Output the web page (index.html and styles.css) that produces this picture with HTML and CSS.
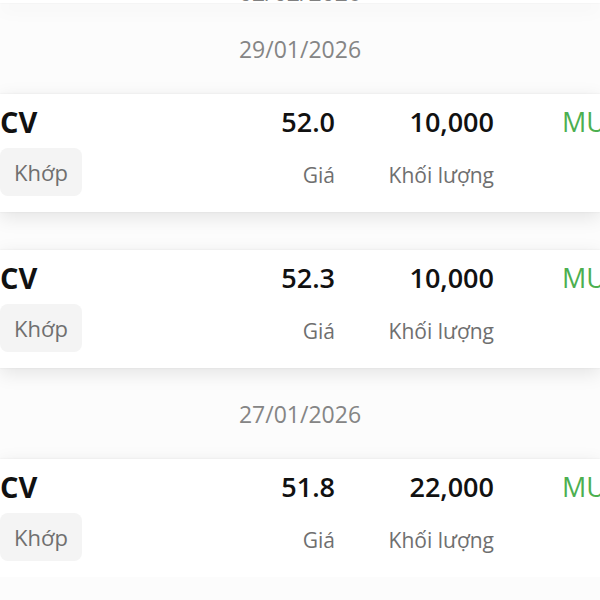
FILE: index.html
```html
<!DOCTYPE html>
<html lang="vi">
<head>
<meta charset="utf-8">
<title>Lịch sử khớp lệnh</title>
<link rel="stylesheet" href="styles.css">
</head>
<body>
<div class="list">
  <div class="sticky-date"><span>02/02/2026</span></div>

  <div class="date-header">29/01/2026</div>
  <div class="card">
    <div class="ticker">CV</div>
    <div class="num">52.0</div>
    <div class="num">10,000</div>
    <div class="side">MUA</div>
    <div class="tag-cell"><span class="tag">Khớp</span></div>
    <div class="label">Giá</div>
    <div class="label">Khối lượng</div>
  </div>
  <div class="card">
    <div class="ticker">CV</div>
    <div class="num">52.3</div>
    <div class="num">10,000</div>
    <div class="side">MUA</div>
    <div class="tag-cell"><span class="tag">Khớp</span></div>
    <div class="label">Giá</div>
    <div class="label">Khối lượng</div>
  </div>

  <div class="date-header">27/01/2026</div>
  <div class="card">
    <div class="ticker">CV</div>
    <div class="num">51.8</div>
    <div class="num">22,000</div>
    <div class="side">MUA</div>
    <div class="tag-cell"><span class="tag">Khớp</span></div>
    <div class="label">Giá</div>
    <div class="label">Khối lượng</div>
  </div>
</div>
</body>
</html>
```
FILE: styles.css
```css
html, body {
  margin: 0;
  padding: 0;
  background: #fcfcfc;
  overflow: hidden;
  font-family: "Open Sans", "Noto Sans", sans-serif;
}

.list {
  display: flex;
  flex-direction: column;
  width: 600px;
}

.sticky-date {
  height: 3px;
  overflow: hidden;
  background: #ffffff;
  display: flex;
  justify-content: center;
  align-items: flex-end;
  box-shadow: 0 5px 18px rgba(0, 0, 0, 0.1), 0 0 2px rgba(0, 0, 0, 0.07);
  position: relative;
  z-index: 2;
}

.sticky-date span {
  font-size: 23px;
  line-height: 22px;
  color: #808080;
}

.date-header {
  height: 91px;
  display: flex;
  align-items: center;
  justify-content: center;
  font-size: 23px;
  line-height: 30px;
  color: #858585;
}

.card {
  background: #ffffff;
  box-shadow: 0 5px 18px rgba(0, 0, 0, 0.1), 0 0 2px rgba(0, 0, 0, 0.07);
  height: 118px;
  box-sizing: border-box;
  padding: 10px 0 16px 0;
  display: grid;
  grid-template-columns: 235px 100px 159px 1fr;
  grid-template-rows: 36px 48px;
  row-gap: 8px;
  overflow: hidden;
  position: relative;
}

.card + .card {
  margin-top: 38px;
}

.ticker {
  font-size: 29px;
  line-height: 36px;
  font-weight: 700;
  color: #111111;
}

.num {
  font-size: 27px;
  line-height: 36px;
  font-weight: 600;
  color: #111111;
  text-align: right;
}

.side {
  font-size: 27px;
  line-height: 36px;
  font-weight: 400;
  color: #4caf50;
  padding-left: 68px;
  white-space: nowrap;
}

.tag-cell {
  display: flex;
}

.tag {
  display: block;
  background: #f4f4f4;
  border-radius: 8px;
  padding: 1px 14px 0 14px;
  height: 48px;
  box-sizing: border-box;
  font-size: 22px;
  line-height: 46px;
  color: #6f6f6f;
}

.label {
  padding-top: 6px;
  font-size: 21px;
  line-height: 42px;
  color: #6f6f6f;
  text-align: right;
  white-space: nowrap;
}
```
